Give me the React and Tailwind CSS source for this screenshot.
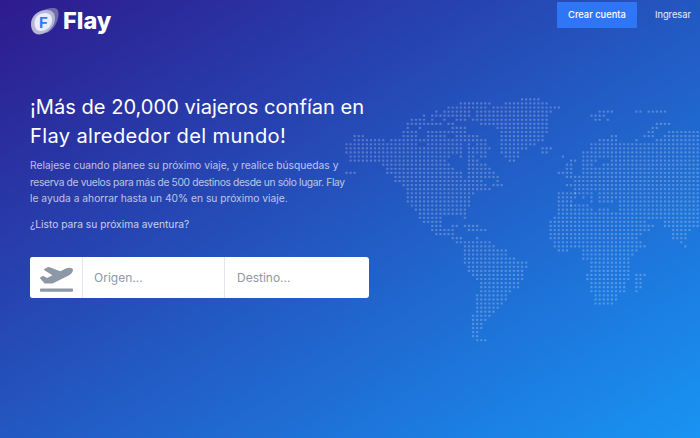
import { FaPlaneDeparture } from "react-icons/fa";

// Dot map: one entry per row, pairs of start/end measured on a 3x crop whose origin is (370, 90)
const MAP_ROWS = [
  [452, 502],
  [268, 355, 403, 527],
  [232, 350, 365, 565],
  [195, 195, 220, 295, 320, 540, 685, 725, 795, 810, 830, 885],
  [158, 158, 183, 210, 220, 295, 320, 527, 660, 700],
  [120, 160, 183, 183, 220, 220, 255, 285, 315, 527, 672, 685, 708, 708],
  [108, 210, 232, 245, 330, 527, 855, 895],
  [108, 108, 145, 145, 243, 285, 380, 527, 843, 855],
  [95, 135, 170, 230, 243, 285, 390, 527, 830, 845, 892, 990],
  [-40, -22, 95, 135, 170, 225, 255, 320, 390, 515, 720, 735, 820, 850, 880, 990],
  [-52, -20, -5, 40, 70, 135, 145, 320, 330, 345, 390, 515, 683, 735, 805, 805, 855, 990],
  [-76, 135, 170, 270, 292, 292, 318, 345, 390, 490, 670, 990],
  [-76, 270, 292, 355, 390, 465, 515, 540, 660, 990],
  [-76, 270, 292, 345, 400, 440, 515, 528, 645, 990],
  [-64, 235, 268, 268, 292, 310, 330, 345, 403, 440, 575, 575, 635, 690, 705, 990],
  [-64, 225, 292, 320, 415, 430, 600, 612, 635, 680, 720, 990],
  [45, 235, 292, 345, 585, 600, 635, 660, 705, 990],
  [58, 245, 292, 355, 585, 600, 645, 990],
  [-76, -48, 58, 270, 292, 368, 562, 600, 645, 990],
  [82, 270, 292, 380, 585, 600, 620, 990],
  [82, 335, 378, 378, 610, 990],
  [95, 345, 365, 392, 585, 990],
  [108, 355, 610, 990],
  [108, 305, 572, 615, 620, 670, 695, 990],
  [108, 295, 572, 615, 645, 645, 670, 670, 695, 990],
  [108, 295, 572, 600, 660, 670, 695, 730, 755, 990],
  [120, 295, 572, 600, 608, 650, 745, 990],
  [132, 285, 572, 660, 695, 715, 755, 990],
  [145, 285, 572, 990],
  [145, 210, 280, 280, 560, 990],
  [157, 210, 548, 825, 890, 990],
  [182, 210, 243, 258, 280, 320, 537, 850, 890, 990],
  [182, 245, 292, 345, 548, 835, 915, 955],
  [205, 245, 548, 810, 915, 945],
  [243, 270, 318, 318, 548, 800, 915, 945],
  [255, 355, 560, 810, 930, 930],
  [280, 368, 560, 825, 942, 942],
  [280, 405, 572, 590, 645, 800],
  [280, 405, 645, 785],
  [280, 430, 645, 775],
  [280, 465, 670, 775],
  [292, 465, 670, 775],
  [292, 455, 670, 775],
  [305, 455, 658, 775, 805, 822],
  [318, 455, 658, 775, 795, 810],
  [330, 443, 670, 760, 795, 810],
  [330, 443, 670, 760, 795, 810],
  [330, 420, 670, 760, 795, 795],
  [318, 405, 682, 735],
  [318, 405, 682, 735],
  [318, 395, 682, 725],
  [318, 380],
  [318, 368],
  [305, 355],
  [305, 345],
  [305, 332],
  [305, 332],
  [305, 320],
  [305, 320],
  [318, 345],
];

const PITCH = 12.25;

function WorldMap() {
  const dots = [];
  MAP_ROWS.forEach((row, r) => {
    for (let i = 0; i < row.length; i += 2) {
      const start = Math.round((row[i] - 3) / PITCH);
      const end = Math.round((row[i + 1] - 3) / PITCH);
      for (let c = start; c <= end; c++) {
        dots.push([370 + (3 + c * PITCH) / 3 - 1.1, 90 + (28 + r * PITCH) / 3 - 1.1]);
      }
    }
  });
  return (
    <svg className="pointer-events-none absolute inset-0" width="700" height="438" viewBox="0 0 700 438">
      {dots.map(([x, y]) => (
        <rect key={`${x}-${y}`} x={x} y={y} width="2.2" height="2.2" rx="0.6" fill="#fff" fillOpacity="0.24" />
      ))}
    </svg>
  );
}

function LogoMark() {
  return (
    <div className="relative h-[28px] w-[29px]">
      <svg className="absolute inset-0" width="29" height="28" viewBox="0 0 29 28">
        <path d="M3 12 C5 6 14 1 23 1 C27 1 28.5 3 28.5 7 C28.5 15 23 24 16 26 Z" fill="#6f6cae" />
        <path d="M1 17 C1 9 8 3 17 3 C22 3 25 6 25 11 C25 19 18 27 9 27.5 C4 27.5 1 23 1 17 Z" fill="#b7b6d8" />
        <path d="M4.5 16 C4.5 10 9 6 15 6 C19.5 6 22 8.5 22 13 C22 19 17 24 10.5 24 C6.5 24 4.5 20.5 4.5 16 Z" fill="#e9edf9" />
      </svg>
      <span className="absolute left-[9px] top-[6px] text-[15px] leading-[20px] font-bold text-[#2f7bf5]">F</span>
    </div>
  );
}

export default function App() {
  return (
    <div className="relative h-[438px] w-[700px] overflow-hidden bg-[linear-gradient(to_bottom_right,#2e1a8e,#1894f4)] font-['Inter',sans-serif] text-white">
      <WorldMap />

      <div className="relative">
        <header className="flex items-start justify-between pl-[30px] pr-[9px] pt-[2px]">
          <div className="flex items-center gap-[4px] pt-[5px]">
            <LogoMark />
            <span className="text-[23.5px] leading-[28px] font-extrabold">Flay</span>
          </div>
          <div className="flex items-center gap-[18px]">
            <button className="h-[26px] w-[80px] rounded-[1px] bg-[#2f76f6] text-[9.3px] font-medium text-white">Crear cuenta</button>
            <span className="text-[9.3px] text-white/90">Ingresar</span>
          </div>
        </header>

        <main className="w-[345px] pl-[30px] pt-[58px]">
          <h1 className="w-[340px] text-[20.1px] leading-[29px] font-normal">
            ¡Más de 20,000 viajeros confían en <span className="tracking-[0.35px]">Flay alrededor del mundo!</span>
          </h1>
          {/* Breaks forced: the fallback font runs wider than the original on the second line */}
          <p className="mt-[6px] whitespace-nowrap text-[10.25px] leading-[16.6px] text-white/70">
            Relajese cuando planee su próximo viaje, y realice búsquedas y
            <br />
            <span className="tracking-[-0.35px]">reserva de vuelos para más de 500 destinos desde un sólo lugar. Flay</span>
            <br />
            le ayuda a ahorrar hasta un 40% en su próximo viaje.
          </p>
          <p className="mt-[9px] text-[10.25px] leading-[16.6px] text-white/75">¿Listo para su próxima aventura?</p>

          <div className="mt-[25px] flex h-[41px] w-[339px] overflow-hidden rounded-[3px] bg-white text-[12px] text-[#8e98a5]">
            <div className="flex w-[52px] items-center justify-center bg-white pt-[1px]">
              <FaPlaneDeparture className="text-[#8d98a6]" size={33} />
            </div>
            <div className="flex w-[143px] items-center border-x border-[#e3e6ec] pl-[11px]">Origen...</div>
            <div className="flex flex-1 items-center pl-[12px]">Destino...</div>
          </div>
        </main>
      </div>
    </div>
  );
}
